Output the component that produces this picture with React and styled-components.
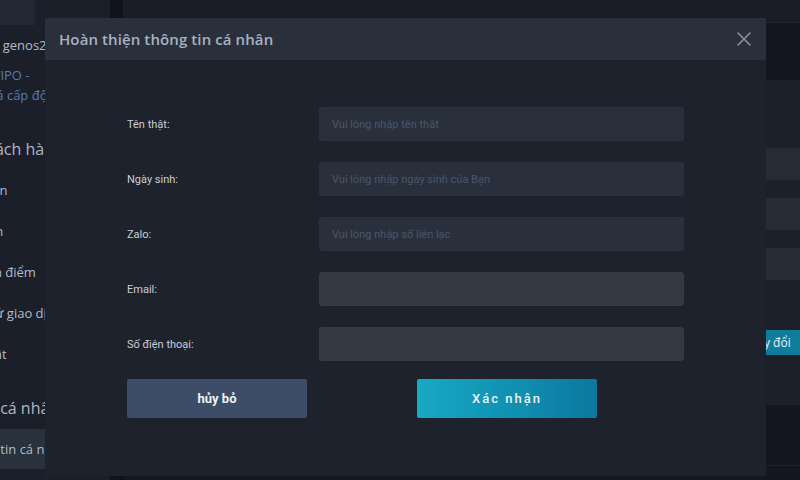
import React from "react";
import styled, { createGlobalStyle } from "styled-components";

const Global = createGlobalStyle`
  html, body {
    margin: 0;
    padding: 0;
    width: 800px;
    height: 480px;
    overflow: hidden;
    background: #14171f;
  }
  * { box-sizing: border-box; }
  #root { width: 800px; height: 480px; overflow: hidden; }
`;

const Page = styled.div`
  display: flex;
  height: 480px;
  margin-left: -70px;
  font-family: "Open Sans", "Noto Sans", sans-serif;
`;

const Sidebar = styled.aside`
  width: 180px;
  flex-shrink: 0;
  background: #1b1f2a;
  display: flex;
  flex-direction: column;
`;

const LogoBox = styled.div`
  width: 105px;
  height: 25px;
  background: #232834;
`;

const SideItem = styled.div`
  height: ${(p) => p.$h || 41}px;
  margin-top: ${(p) => p.$mt || 0}px;
  padding-left: ${(p) => p.$indent || 26}px;
  display: flex;
  flex-direction: column;
  justify-content: center;
  white-space: nowrap;
  font-size: ${(p) => p.$size || 13}px;
  line-height: 20px;
  color: ${(p) => p.$color || "#b3bac6"};
  background: ${(p) => (p.$active ? "#28313c" : "transparent")};
`;

const Gutter = styled.div`
  width: 13px;
  flex-shrink: 0;
  background: #10131a;
`;

const Main = styled.main`
  flex: 1;
  min-width: 900px;
  display: flex;
  flex-direction: column;
`;

const TopBar = styled.div`
  height: 23px;
  background: #1a1d27;
  border-bottom: 1px solid #20242e;
`;

const Spacer = styled.div`
  height: ${(p) => p.$h}px;
`;

const Panel = styled.section`
  height: 325px;
  background: #1c2029;
  padding-top: 68px;
  padding-left: 330px;
  display: flex;
  flex-direction: column;
  gap: 18px;
`;

const PanelInput = styled.div`
  height: 32px;
  width: 560px;
  background: #262b35;
  border-radius: 3px;
`;

const PanelButton = styled.div`
  margin-top: 32px;
  margin-left: 269px;
  width: 90px;
  height: 25px;
  background: #0f7c9c;
  color: #e9f3f7;
  font-size: 12px;
  display: flex;
  align-items: center;
  justify-content: center;
`;

const Footer = styled.div`
  height: 15px;
  margin-top: 60px;
  border-top: 1px solid #1f232c;
`;

const Modal = styled.div`
  position: fixed;
  left: 45px;
  top: 18px;
  width: 721px;
  height: 458px;
  display: flex;
  flex-direction: column;
  background: #1e222d;
`;

const ModalHeader = styled.div`
  height: 42px;
  flex-shrink: 0;
  background: #2a303b;
  display: flex;
  align-items: center;
  justify-content: space-between;
  padding: 0 13px 0 14px;
`;

const Title = styled.h2`
  margin: 0;
  font-family: "Open Sans", "Noto Sans", sans-serif;
  font-weight: 600;
  font-size: 15px;
  letter-spacing: 0.1px;
  color: #a8b2c1;
`;

const CloseButton = styled.button`
  width: 18px;
  height: 18px;
  padding: 0;
  border: none;
  background: transparent;
  display: flex;
  align-items: center;
  justify-content: center;
  cursor: pointer;
`;

const ModalBody = styled.div`
  flex: 1;
  padding: 47px 82px 0 82px;
  font-family: Roboto, "Noto Sans", sans-serif;
`;

const Form = styled.div`
  display: grid;
  grid-template-columns: 192px 365px;
  grid-auto-rows: 34px;
  row-gap: 21px;
`;

const Label = styled.label`
  display: flex;
  align-items: center;
  font-size: 11px;
  color: #c8cfd9;
`;

const Input = styled.input`
  height: 34px;
  width: 365px;
  border: 1px solid ${(p) => (p.$light ? "#353c46" : "#2c323d")};
  border-radius: 3px;
  background: ${(p) => (p.$light ? "#323943" : "#2a303b")};
  padding: 0 12px;
  font-family: Roboto, "Noto Sans", sans-serif;
  font-size: 11px;
  color: #c3cad5;
  outline: none;
  &::placeholder {
    color: #48566f;
  }
`;

const Actions = styled.div`
  margin-top: 18px;
  display: flex;
  gap: 110px;
`;

const Button = styled.button`
  width: 180px;
  height: 39px;
  border: none;
  border-radius: 2px;
  font-family: Roboto, "Noto Sans", sans-serif;
  font-size: 13px;
  color: #eef2f6;
  cursor: pointer;
  font-weight: ${(p) => (p.$primary ? 500 : 700)};
  letter-spacing: ${(p) => (p.$primary ? "2px" : "0")};
  background: ${(p) =>
    p.$primary
      ? "linear-gradient(90deg, #18a9c4 0%, #1192b3 50%, #0c789e 100%)"
      : "#3d4c67"};
`;

const BlueLine = styled.span`
  padding-left: ${(p) => p.$shift || 0}px;
`;

const sideItems = [
  { t: "Nạp tiền", i: 26 },
  { t: "Đổi tiền", i: 26 },
  { t: "Chuyển điểm", i: 26 },
  { t: "Lịch sử giao dịch", i: 31 },
  { t: "Bảo mật", i: 26 },
];

export default function App() {
  return (
    <>
      <Global />
      <Page>
        <Sidebar>
          <LogoBox />
          <SideItem $h={40} $indent={18}>Xin chào genos2024</SideItem>
          <SideItem $h={40} $indent={20} $color="#557cab">
            <BlueLine $shift={4}>Hạng: VIPO -</BlueLine>
            <BlueLine>Đánh giá cấp độ</BlueLine>
          </SideItem>
          <SideItem $mt={23} $indent={13} $size={16} $color="#aeb6c2">
            Danh sách hàng
          </SideItem>
          {sideItems.map(({ t, i }) => (
            <SideItem key={t} $indent={i}>
              {t}
            </SideItem>
          ))}
          <SideItem $mt={13} $h={42} $indent={23} $size={16} $color="#aeb6c2">
            Hồ sơ cá nhân
          </SideItem>
          <SideItem $h={40} $indent={29} $active>
            Thông tin cá nhân
          </SideItem>
        </Sidebar>
        <Gutter />
        <Main>
          <TopBar />
          <Spacer $h={57} />
          <Panel>
            <PanelInput />
            <PanelInput />
            <PanelInput />
            <PanelButton>Thay đổi</PanelButton>
          </Panel>
          <Footer />
        </Main>
      </Page>

      <Modal>
        <ModalHeader>
          <Title>Hoàn thiện thông tin cá nhân</Title>
          <CloseButton aria-label="Đóng">
            <svg width="16" height="16" viewBox="0 0 16 16">
              <path
                d="M2 2 L14 14 M14 2 L2 14"
                stroke="#8a92a0"
                strokeWidth="1.6"
                strokeLinecap="round"
              />
            </svg>
          </CloseButton>
        </ModalHeader>
        <ModalBody>
          <Form>
            <Label>Tên thật:</Label>
            <Input placeholder="Vui lòng nhập tên thật" />
            <Label>Ngày sinh:</Label>
            <Input placeholder="Vui lòng nhập ngày sinh của Bạn" />
            <Label>Zalo:</Label>
            <Input placeholder="Vui lòng nhập số liên lạc" />
            <Label>Email:</Label>
            <Input $light />
            <Label>Số điện thoại:</Label>
            <Input $light />
          </Form>
          <Actions>
            <Button>hủy bỏ</Button>
            <Button $primary>Xác nhận</Button>
          </Actions>
        </ModalBody>
      </Modal>
    </>
  );
}
